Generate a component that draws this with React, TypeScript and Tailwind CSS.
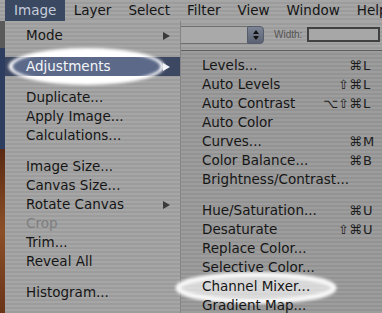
import type { ReactNode } from "react";

type Item =
  | "sep"
  | {
      label: string;
      arrow?: boolean;
      active?: boolean;
      disabled?: boolean;
      mods?: string;
      keyChar?: string;
      circled?: boolean;
    };

const menuStripes =
  "bg-[repeating-linear-gradient(180deg,#a6a6a6_0px,#a6a6a6_2px,#9c9c9c_2px,#9c9c9c_4px)]";
const subStripes =
  "bg-[repeating-linear-gradient(180deg,#9d9d9d_0px,#9d9d9d_2px,#939393_2px,#939393_4px)]";

const imageMenu: Item[] = [
  { label: "Mode", arrow: true },
  "sep",
  { label: "Adjustments", arrow: true, active: true },
  "sep",
  { label: "Duplicate..." },
  { label: "Apply Image..." },
  { label: "Calculations..." },
  "sep",
  { label: "Image Size..." },
  { label: "Canvas Size..." },
  { label: "Rotate Canvas", arrow: true },
  { label: "Crop", disabled: true },
  { label: "Trim..." },
  { label: "Reveal All" },
  "sep",
  { label: "Histogram..." },
];

const adjustMenu: Item[] = [
  { label: "Levels...", keyChar: "L" },
  { label: "Auto Levels", mods: "⇧", keyChar: "L" },
  { label: "Auto Contrast", mods: "⌥⇧", keyChar: "L" },
  { label: "Auto Color" },
  { label: "Curves...", keyChar: "M" },
  { label: "Color Balance...", keyChar: "B" },
  { label: "Brightness/Contrast..." },
  "sep",
  { label: "Hue/Saturation...", keyChar: "U" },
  { label: "Desaturate", mods: "⇧", keyChar: "U" },
  { label: "Replace Color..." },
  { label: "Selective Color..." },
  { label: "Channel Mixer...", circled: true },
  { label: "Gradient Map..." },
];

function Arrow({ white }: { white?: boolean }) {
  return (
    <svg className="absolute left-[158px] top-[6px] z-20" width="8" height="8" viewBox="0 0 8 8">
      <polygon points="0,0 7,4 0,8" fill={white ? "#f2f4f8" : "#3a3a3a"} />
    </svg>
  );
}

// hand-drawn style circle around the highlighted row
function AdjustGlow() {
  return (
    <svg className="absolute left-0 top-[-12px] z-10" width="176" height="44" viewBox="0 0 176 44">
      <defs>
        <filter id="soft-a" x="-10%" y="-40%" width="120%" height="180%">
          <feGaussianBlur stdDeviation="1.6" />
        </filter>
        <clipPath id="band-a">
          <rect x="0" y="12" width="176" height="19" />
        </clipPath>
      </defs>
      <ellipse cx="81.5" cy="21.5" rx="78" ry="18.5" fill="#ffffff" filter="url(#soft-a)" />
      <g clipPath="url(#band-a)">
        <ellipse cx="81.5" cy="21.5" rx="74" ry="16" fill="#5b6989" filter="url(#soft-a)" />
      </g>
    </svg>
  );
}

function MixerGlow() {
  return (
    <svg className="absolute left-[-10px] top-[-12px]" width="180" height="46" viewBox="0 0 180 46">
      <defs>
        <filter id="soft-m" x="-10%" y="-40%" width="120%" height="180%">
          <feGaussianBlur stdDeviation="1.8" />
        </filter>
      </defs>
      <ellipse
        cx="85"
        cy="23"
        rx="78"
        ry="13.5"
        fill="#ffffff"
        fillOpacity="0.62"
        stroke="#ffffff"
        strokeOpacity="0.9"
        strokeWidth="5"
        filter="url(#soft-m)"
      />
    </svg>
  );
}

function Row({ item, sub }: { item: Exclude<Item, "sep">; sub?: boolean }) {
  let overlay: ReactNode = null;
  if (item.active) overlay = <AdjustGlow />;
  if (item.circled) overlay = <MixerGlow />;

  return (
    <div
      className={
        item.active
          ? "relative flex h-[19px] items-center bg-[#3c4762] pl-[21px] text-[#f4f6fa]"
          : item.disabled
            ? "relative flex h-[19px] items-center pl-[21px] text-[#7e7e7e]"
            : "relative flex h-[19px] items-center pl-[21px] text-[#161616]"
      }
    >
      {overlay}
      <span className="relative z-20 flex-1 whitespace-nowrap leading-[19px]">{item.label}</span>
      {sub && item.keyChar ? (
        <>
          <span className="relative z-20 whitespace-nowrap text-[13px] leading-[19px] text-[#1c1c1c]">
            {(item.mods ?? "") + "⌘"}
          </span>
          <span className="relative z-20 w-[20px] pl-[1px] text-[13px] leading-[19px] text-[#1c1c1c]">
            {item.keyChar}
          </span>
        </>
      ) : null}
      {item.arrow ? <Arrow white={item.active} /> : null}
    </div>
  );
}

function MenuList({ items, sub }: { items: Item[]; sub?: boolean }) {
  return (
    <>
      {items.map((item, i) =>
        item === "sep" ? (
          <div className="h-[12px]" key={i} />
        ) : (
          <Row item={item} sub={sub} key={i} />
        )
      )}
    </>
  );
}

export default function App() {
  const titles = ["Layer", "Select", "Filter", "View", "Window", "Help"];

  return (
    <div className="relative h-[313px] w-[382px] overflow-hidden bg-[#5c5c5c] font-['DejaVu_Sans',sans-serif] text-[13.5px]">
      {/* menu bar */}
      <div className={`flex h-[21px] items-center pl-[5px] text-[13.5px] text-[#141414] ${menuStripes}`}>
        <span className="flex h-[21px] items-center bg-[#3b4862] px-[9px] text-[#c6cdd9]">Image</span>
        {titles.map((t) => (
          <span className="whitespace-nowrap px-[8.5px]" key={t}>
            {t}
          </span>
        ))}
      </div>

      <div className="flex h-[292px]">
        {/* desktop behind the menus */}
        <div className="w-[5px] shrink-0 bg-[linear-gradient(180deg,#5a5a5a_0px,#5a5a5a_27px,#2d3d5f_27px,#2d3d5f_128px,#5a2a12_128px,#8c5028_210px,#6a3418_292px)]" />

        {/* Image menu */}
        <div className={`relative w-[176px] shrink-0 border-r border-[#858585] pt-[5px] ${menuStripes}`}>
          <MenuList items={imageMenu} />
        </div>

        {/* right side: options bar + Adjustments submenu */}
        <div className="flex min-w-0 flex-1 flex-col">
          <div className={`flex h-[30px] shrink-0 items-center border-b border-[#5e5e5e] pb-[2px] ${menuStripes}`}>
            <div className="h-[18px] w-[66px] border-y border-[#6f6f6f] bg-[#a9a9a9]" />
            <div className="flex h-[18px] w-[17px] flex-col items-center justify-center gap-[2px] rounded-r-[4px] border border-[#555c6a] bg-[linear-gradient(180deg,#7c8496,#5a6274)]">
              <svg width="6" height="4" viewBox="0 0 6 4">
                <polygon points="3,0 6,4 0,4" fill="#111" />
              </svg>
              <svg width="6" height="4" viewBox="0 0 6 4">
                <polygon points="0,0 6,0 3,4" fill="#111" />
              </svg>
            </div>
            <span className="ml-[10px] font-['Liberation_Sans',sans-serif] text-[10px] text-[#555]">Width:</span>
            <div className="ml-[5px] h-[15px] w-[73px] border-2 border-[#414141] bg-[#a7a7a7]" />
          </div>

          <div className={`relative w-[201px] flex-1 pt-[5px] ${subStripes}`}>
            <MenuList items={adjustMenu} sub />
          </div>
        </div>
      </div>
    </div>
  );
}
